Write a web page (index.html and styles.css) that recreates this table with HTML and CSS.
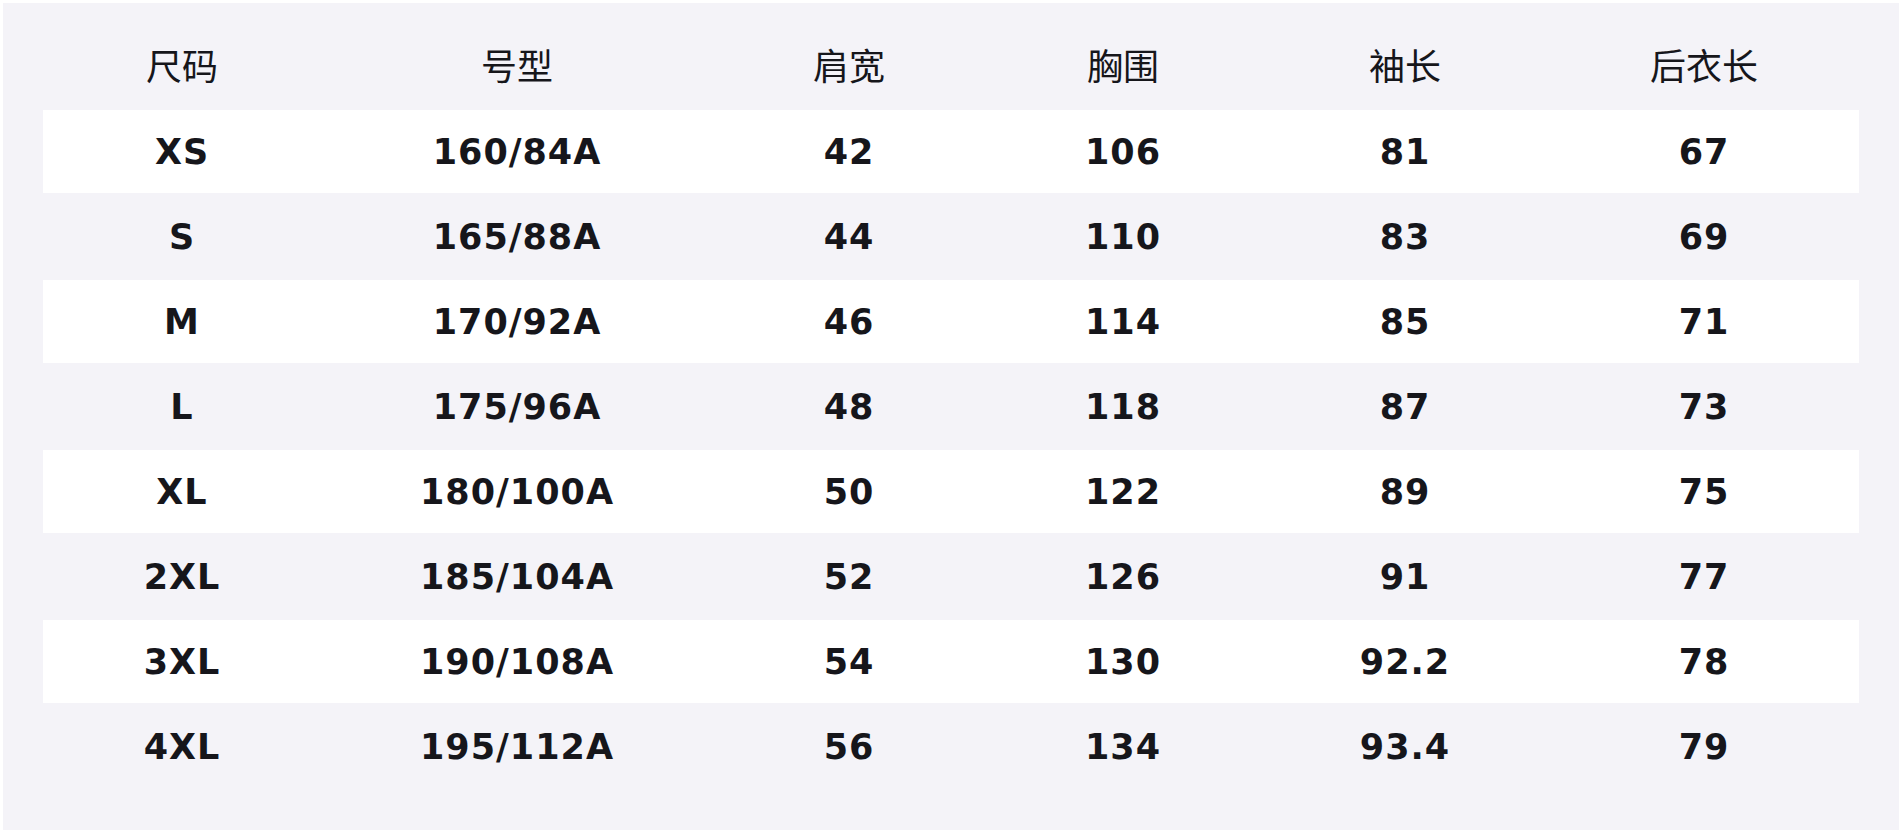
FILE: index.html
```html
<!DOCTYPE html>
<html lang="zh">
<head>
<meta charset="utf-8">
<title>尺码表</title>
<link rel="stylesheet" href="styles.css">
</head>
<body>
<div class="panel">
  <div class="row head">
    <div>尺码</div><div>号型</div><div>肩宽</div><div>胸围</div><div>袖长</div><div>后衣长</div>
  </div>
  <div class="row odd"><div>XS</div><div>160/84A</div><div>42</div><div>106</div><div>81</div><div>67</div></div>
  <div class="row"><div>S</div><div>165/88A</div><div>44</div><div>110</div><div>83</div><div>69</div></div>
  <div class="row odd"><div>M</div><div>170/92A</div><div>46</div><div>114</div><div>85</div><div>71</div></div>
  <div class="row"><div>L</div><div>175/96A</div><div>48</div><div>118</div><div>87</div><div>73</div></div>
  <div class="row odd"><div>XL</div><div>180/100A</div><div>50</div><div>122</div><div>89</div><div>75</div></div>
  <div class="row"><div>2XL</div><div>185/104A</div><div>52</div><div>126</div><div>91</div><div>77</div></div>
  <div class="row odd"><div>3XL</div><div>190/108A</div><div>54</div><div>130</div><div>92.2</div><div>78</div></div>
  <div class="row"><div>4XL</div><div>195/112A</div><div>56</div><div>134</div><div>93.4</div><div>79</div></div>
</div>
</body>
</html>
```
FILE: styles.css
```css
html, body {
  margin: 0;
  padding: 0;
  background: #ffffff;
}
body {
  padding: 3px;
}
.panel {
  background: #f4f3f8;
  height: 827px;
  box-sizing: border-box;
  padding: 42px 40px;
  display: flex;
  flex-direction: column;
  gap: 2px;
  color: #16161b;
  font-family: "DejaVu Sans", "Noto Sans CJK SC", sans-serif;
}
.row {
  display: grid;
  grid-template-columns: 278fr 392fr 272fr 276fr 288fr 310fr;
  height: 83px;
  align-items: center;
  text-align: center;
  font-weight: bold;
  font-size: 35px;
  letter-spacing: 1px;
}
.row.odd {
  background: #ffffff;
}
.row.head {
  height: 63px;
  align-items: start;
  font-weight: normal;
  font-family: "Noto Sans CJK SC", sans-serif;
  font-size: 36px;
  letter-spacing: 0;
  line-height: 1;
  padding-top: 1px;
  box-sizing: border-box;
}
```
